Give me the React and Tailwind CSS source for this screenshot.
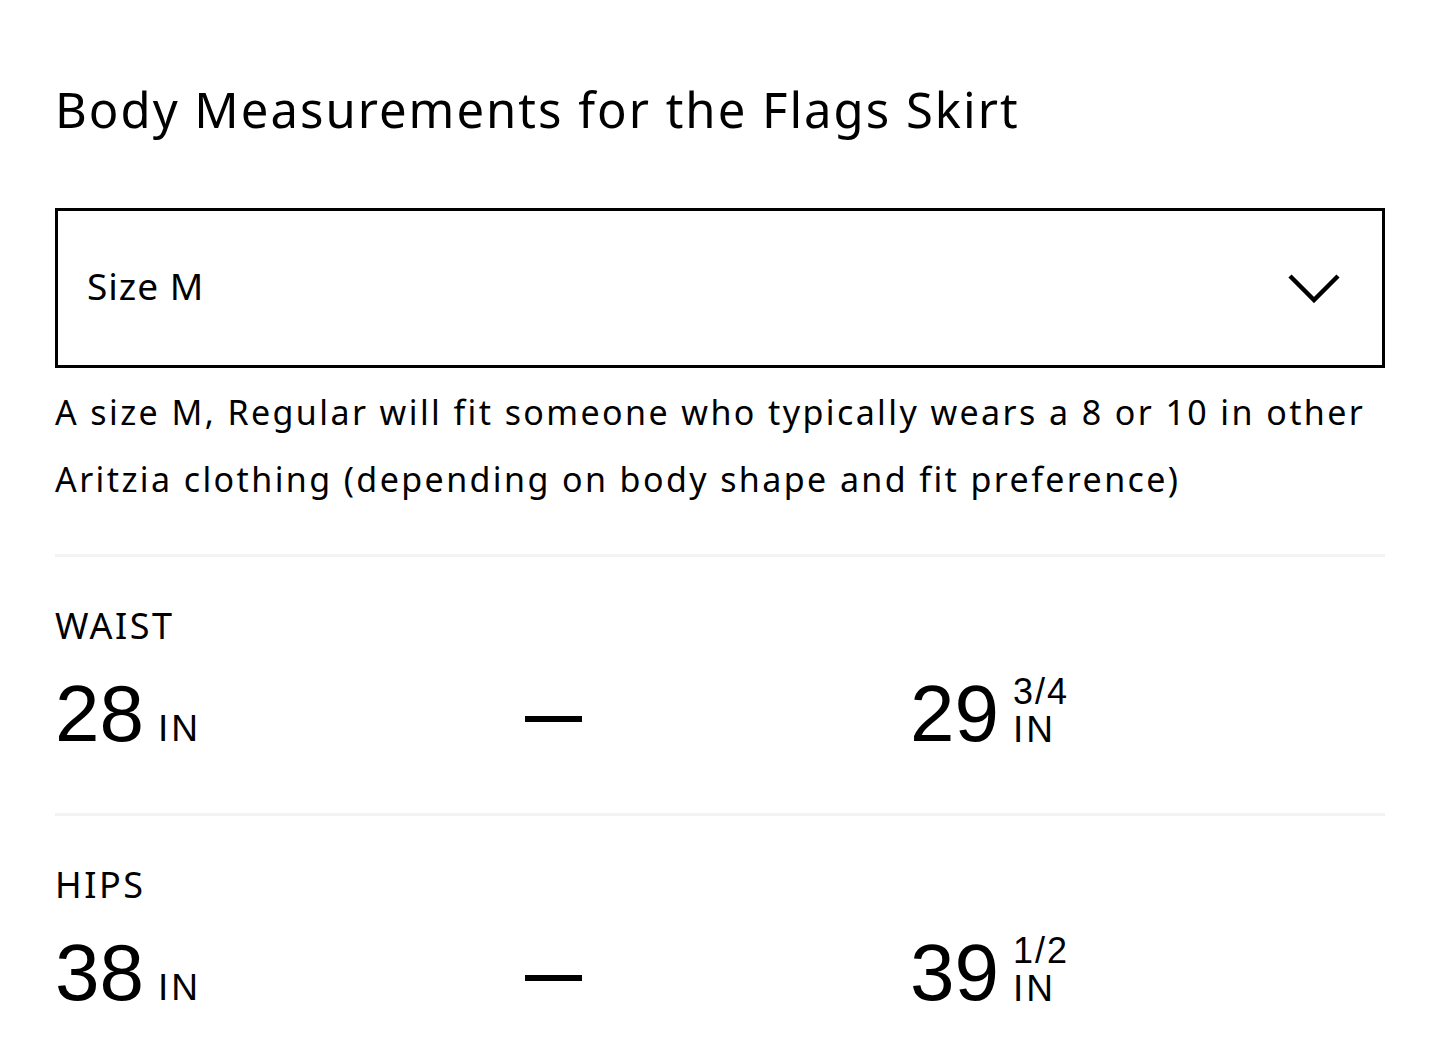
import React from 'react';

const rows = [
  { label: 'WAIST', min: '28', max: '29', frac: '3/4' },
  { label: 'HIPS', min: '38', max: '39', frac: '1/2' },
];

const Chevron = () => (
  <svg width="52" height="30" viewBox="0 0 52 30" fill="none">
    <path d="M2 3 L26 27 L50 3" stroke="black" strokeWidth="4.5" />
  </svg>
);

function MeasureRow({ row }) {
  return (
    <div>
      <div className="mt-[51px] text-[36px] leading-none tracking-[2.5px]">{row.label}</div>
      <div className="mt-[30px] grid grid-cols-[470px_385px_1fr]" style={{ fontFamily: '"Liberation Sans", Arial, sans-serif' }}>
        <div className="flex items-baseline gap-[14px]">
          <span className="text-[80px] leading-none">{row.min}</span>
          <span className="text-[37px] leading-none tracking-[3px]">IN</span>
        </div>
        <div className="flex items-center">
          <div className="mt-[9px] h-[6px] w-[57px] bg-black"></div>
        </div>
        <div className="flex items-end gap-[14px]">
          <span className="text-[80px] leading-none">{row.max}</span>
          <div className="mb-[6px] flex flex-col">
            <span className="text-[36px] leading-none tracking-[2px]">{row.frac}</span>
            <span className="mt-[1px] text-[37px] leading-none tracking-[3px]">IN</span>
          </div>
        </div>
      </div>
    </div>
  );
}

export default function App() {
  return (
    <div className="min-h-screen bg-white px-[55px] pt-[85px] text-black" style={{ fontFamily: '"Noto Sans", "Open Sans", sans-serif' }}>
      <h1 className="text-[49px] leading-none tracking-[2px]">Body Measurements for the Flags Skirt</h1>

      <div className="mt-[74px] flex h-[160px] items-center justify-between border-[3px] border-black pl-[29px] pr-[42px]">
        <span className="mb-[6px] text-[37px] leading-none tracking-[1px]">Size M</span>
        <Chevron />
      </div>

      <p className="mt-[11px] text-[34px] leading-[67px] tracking-[2.4px]">
        A size M, Regular will fit someone who typically wears a 8 or 10 in other Aritzia clothing (depending on body shape and fit preference)
      </p>

      <div className="mt-[41px] h-[3px] bg-[#f3f3f3]"></div>
      <MeasureRow row={rows[0]} />
      <div className="mt-[59px] h-[3px] bg-[#f3f3f3]"></div>
      <MeasureRow row={rows[1]} />
    </div>
  );
}
